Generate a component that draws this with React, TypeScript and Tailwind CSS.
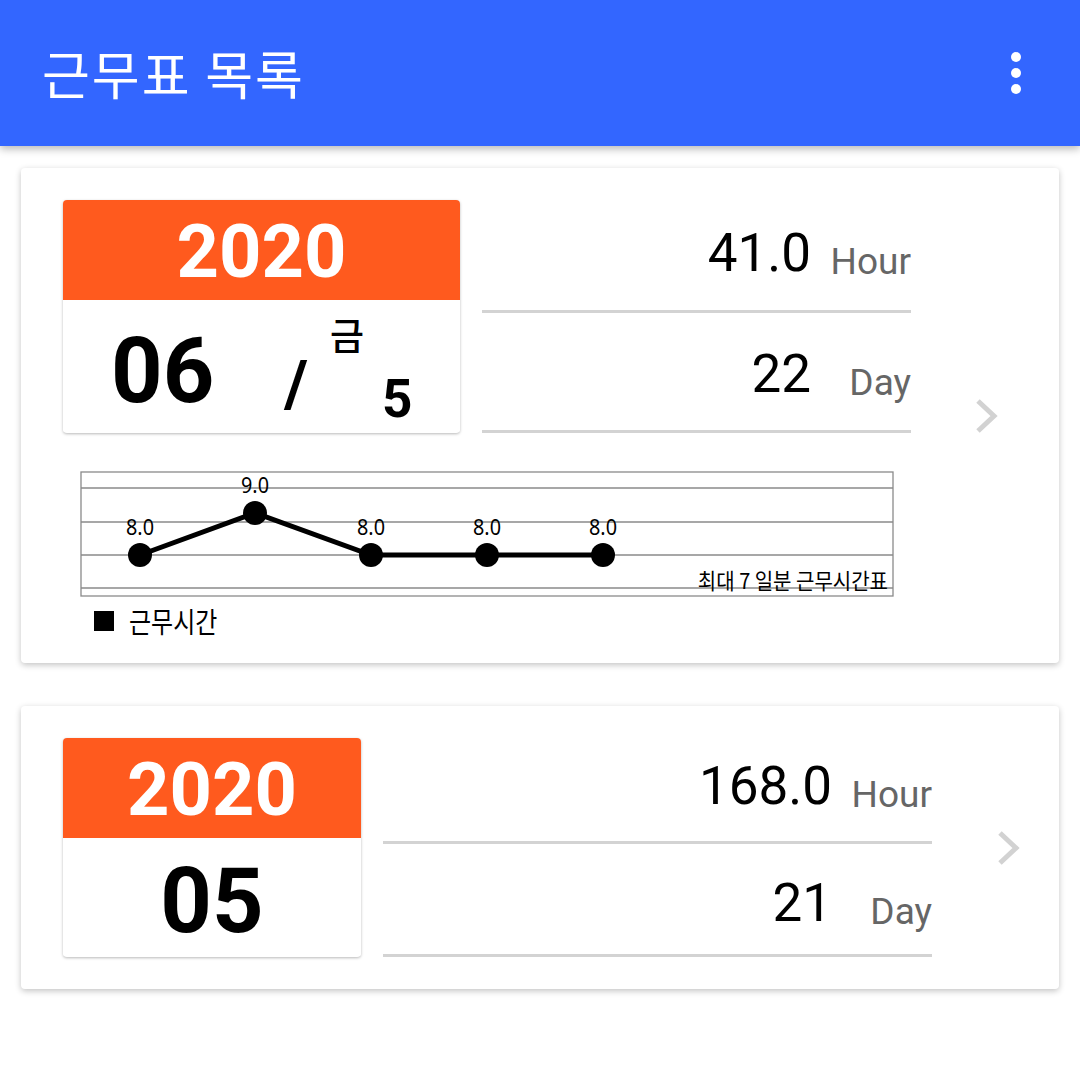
type Stat = { value: string; unit: string };

function Chevron({ className }: { className: string }) {
  return (
    <svg width="24" height="36" viewBox="0 0 24 36" className={className}>
      <polyline points="3,3 19,18 3,33" fill="none" stroke="#d2d2d2" strokeWidth="5" />
    </svg>
  );
}

function StatRows({ rows, width }: { rows: { stat: Stat; h: string; pt: string }[]; width: string }) {
  return (
    <div className={`flex flex-col ${width}`}>
      {rows.map((r) => (
        <div
          key={r.stat.unit}
          className={`flex justify-end items-baseline border-b-[3px] border-[#d3d3d3] ${r.h} ${r.pt}`}
        >
          <span className="text-[53px] leading-none text-black">{r.stat.value}</span>
          <span className="w-[100px] translate-y-[3px] text-right text-[37px] leading-none text-[#666666]">
            {r.stat.unit}
          </span>
        </div>
      ))}
    </div>
  );
}

function WorkChart() {
  const pts = [
    { x: 60, y: 85, v: '8.0' },
    { x: 175, y: 43, v: '9.0' },
    { x: 291, y: 85, v: '8.0' },
    { x: 407, y: 85, v: '8.0' },
    { x: 523, y: 85, v: '8.0' },
  ];
  const grid = [18, 52, 85, 118];
  return (
    <div className="ml-[17px] mt-[37px]">
      <div className="relative w-[814px] h-[128px]">
        <svg width="814" height="128" viewBox="0 0 814 128" className="block">
          <rect x="1" y="2" width="812" height="124" fill="none" stroke="#8a8a8a" strokeWidth="1.3" />
          {grid.map((y) => (
            <line key={y} x1="1" x2="813" y1={y} y2={y} stroke="#8a8a8a" strokeWidth="1.3" />
          ))}
          <polyline
            points={pts.map((p) => `${p.x},${p.y}`).join(' ')}
            fill="none"
            stroke="#000"
            strokeWidth="5"
          />
          {pts.map((p, i) => (
            <g key={i}>
              <circle cx={p.x} cy={p.y} r="12" fill="#000" />
              <text
                x={p.x}
                y={p.y - 20}
                textAnchor="middle"
                fontSize="22"
                fontFamily="'Noto Sans', sans-serif"
                textLength="28"
                lengthAdjust="spacingAndGlyphs"
                fill="#000"
              >
                {p.v}
              </text>
            </g>
          ))}
        </svg>
        <span className="absolute right-[6px] top-[101px] text-[20px] leading-none text-black scale-y-[1.1] origin-bottom font-['Noto_Sans_CJK_KR',sans-serif] whitespace-nowrap">
          최대 7 일분 근무시간표
        </span>
      </div>
      <div className="flex items-center gap-[15px] pl-[14px] mt-[8px] h-[30px]">
        <span className="size-[20px] bg-black" />
        <span className="text-[24px] leading-none text-black scale-y-[1.2] font-['Noto_Sans_CJK_KR',sans-serif]">
          근무시간
        </span>
      </div>
    </div>
  );
}

export default function App() {
  return (
    <div className="min-h-[1080px] bg-white font-['Roboto','Noto_Sans_CJK_KR',sans-serif]">
      <header className="h-[146px] bg-[#3366ff] flex items-center justify-between pl-[42px] pr-[59px] shadow-[0_3px_8px_rgba(0,0,0,0.28)] relative z-10">
        <h1 className="text-[52px] tracking-[2px] leading-none text-white font-['Noto_Sans_CJK_KR',sans-serif]">
          근무표 목록
        </h1>
        <div className="flex flex-col gap-[6px]">
          <span className="size-[10px] rounded-full bg-white" />
          <span className="size-[10px] rounded-full bg-white" />
          <span className="size-[10px] rounded-full bg-white" />
        </div>
      </header>

      {/* 6월 */}
      <div className="mx-[21px] mt-[22px] rounded-[4px] bg-white shadow-[0_2px_6px_rgba(0,0,0,0.24)] flex items-center pb-[27px]">
        <div className="flex flex-col pl-[42px] pt-[32px]">
          <div className="flex gap-[22px]">
            <div className="w-[397px] rounded-[4px] overflow-hidden shadow-[0_1px_3px_rgba(0,0,0,0.28)]">
              <div className="h-[100px] bg-[#ff5a1e] flex items-center justify-center pt-[4px]">
                <span className="text-[74px] font-bold leading-none text-white">2020</span>
              </div>
              <div className="h-[132px] bg-white flex items-start pl-[48px]">
                <span className="mt-[27px] text-[90px] font-bold leading-none text-black">06</span>
                <span className="ml-[70px] mt-[53px] text-[64px] font-bold leading-none text-black">/</span>
                <span className="ml-[22px] mt-[16px] text-[37px] font-medium leading-none text-black font-['Noto_Sans_CJK_KR',sans-serif]">
                  금
                </span>
                <span className="ml-[18px] mt-[73px] text-[53px] font-bold leading-none text-black">5</span>
              </div>
            </div>
            <StatRows
              width="w-[429px]"
              rows={[
                { stat: { value: '41.0', unit: 'Hour' }, h: 'h-[113px]', pt: 'pt-[27px]' },
                { stat: { value: '22', unit: 'Day' }, h: 'h-[120px]', pt: 'pt-[35px]' },
              ]}
            />
          </div>
          <WorkChart />
        </div>
        <Chevron className="ml-[64px] mt-[27px]" />
      </div>

      {/* 5월 */}
      <div className="mx-[21px] mt-[43px] rounded-[4px] bg-white shadow-[0_2px_6px_rgba(0,0,0,0.24)] flex items-center pb-[32px]">
        <div className="flex gap-[22px] pl-[42px] pt-[32px]">
          <div className="w-[298px] rounded-[4px] overflow-hidden shadow-[0_1px_3px_rgba(0,0,0,0.28)]">
            <div className="h-[100px] bg-[#ff5a1e] flex items-center justify-center pt-[4px]">
              <span className="text-[74px] font-bold leading-none text-white">2020</span>
            </div>
            <div className="h-[118px] bg-white flex justify-center pt-[19px]">
              <span className="text-[90px] font-bold leading-none text-black">05</span>
            </div>
          </div>
          <StatRows
            width="w-[549px]"
            rows={[
              { stat: { value: '168.0', unit: 'Hour' }, h: 'h-[106px]', pt: 'pt-[22px]' },
              { stat: { value: '21', unit: 'Day' }, h: 'h-[113px]', pt: 'pt-[33px]' },
            ]}
          />
        </div>
        <Chevron className="ml-[65px] mt-[32px]" />
      </div>
    </div>
  );
}
